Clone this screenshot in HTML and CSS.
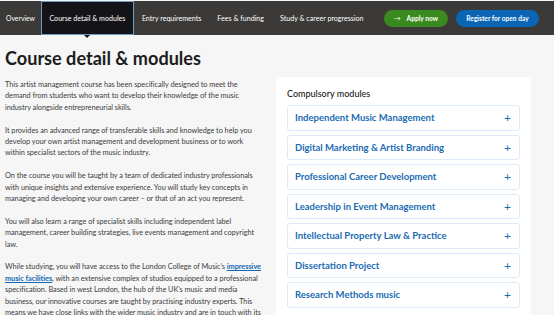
FILE: index.html
```html
<!DOCTYPE html>
<html lang="en">
<head>
<meta charset="utf-8">
<link rel="stylesheet" href="styles.css">
</head>
<body>
<nav class="tabs">
  <a class="tab first">Overview</a>
  <a class="tab active">Course detail &amp; modules</a>
  <a class="tab">Entry requirements</a>
  <a class="tab">Fees &amp; funding</a>
  <a class="tab">Study &amp; career progression</a>
  <div class="actions">
    <a class="btn apply"><span class="arrow">&rarr;</span> Apply now</a>
    <a class="btn register">Register for open day</a>
  </div>
</nav>
<main class="page">
  <section class="content">
    <h1 class="title">Course detail &amp; modules</h1>
    <p>This artist management course has been specifically designed to meet the<br>demand from students who want to develop their knowledge of the music<br>industry alongside entrepreneurial skills.</p>
    <p>It provides an advanced range of transferable skills and knowledge to help you<br>develop your own artist management and development business or to work<br>within specialist sectors of the music industry.</p>
    <p>On the course you will be taught by a team of dedicated industry professionals<br>with unique insights and extensive experience. You will study key concepts in<br>managing and developing your own career – or that of an act you represent.</p>
    <p>You will also learn a range of specialist skills including independent label<br>management, career building strategies, live events management and copyright<br>law.</p>
    <p>While studying, you will have access to the London College of Music’s <a class="link">impressive<br>music facilities</a>, with an extensive complex of studios equipped to a professional<br>specification. Based in west London, the hub of the UK’s music and media<br>business, our innovative courses are taught by practising industry experts. This<br>means we have close links with the wider music industry and are in touch with its</p>
  </section>
  <aside class="card">
    <h2 class="card-title">Compulsory modules</h2>
    <ul class="modules">
      <li class="module"><span>Independent Music Management</span><span class="plus">+</span></li>
      <li class="module"><span>Digital Marketing &amp; Artist Branding</span><span class="plus">+</span></li>
      <li class="module"><span>Professional Career Development</span><span class="plus">+</span></li>
      <li class="module"><span>Leadership in Event Management</span><span class="plus">+</span></li>
      <li class="module"><span>Intellectual Property Law &amp; Practice</span><span class="plus">+</span></li>
      <li class="module"><span>Dissertation Project</span><span class="plus">+</span></li>
      <li class="module"><span>Research Methods music</span><span class="plus">+</span></li>
    </ul>
  </aside>
</main>
</body>
</html>
```
FILE: styles.css
```css
* { box-sizing: border-box; }
html, body { margin: 0; padding: 0; }
body {
  font-family: Lato, "Open Sans", sans-serif;
  background: #f6f6f6;
  color: #404040;
  overflow: hidden;
  height: 315px;
}
.tabs {
  display: flex;
  align-items: stretch;
  height: 34px;
  margin-top: 1px;
  background: #3b3a38;
}
.tab {
  position: relative;
  display: flex;
  align-items: center;
  color: #fff;
  font-size: 7.1px;
  white-space: nowrap;
  border: 1px solid transparent;
  padding: 0 7px;
}
.tab.first { padding: 0 5px 0 5px; font-size: 6.8px; }
.tab.active {
  background: #141418;
  border-color: #6f9bc2;
  padding: 0 7.5px;
}
.tab.active::after {
  content: "";
  position: absolute;
  left: 50%;
  bottom: -4px;
  margin-left: -3px;
  border-left: 3px solid transparent;
  border-right: 3px solid transparent;
  border-top: 3px solid #141418;
}
.actions {
  display: flex;
  align-items: center;
  gap: 8px;
  margin-left: auto;
  padding-right: 15px;
}
.btn {
  display: flex;
  align-items: center;
  justify-content: center;
  height: 17px;
  border-radius: 9px;
  color: #fff;
  font-size: 6.6px;
  font-weight: 700;
  white-space: nowrap;
}
.apply { background: #3a8b1f; width: 64px; }
.apply .arrow { margin-right: 6px; font-weight: 400; }
.register { background: #0a66b4; width: 83px; }
.page {
  display: flex;
  align-items: flex-start;
  padding-left: 5px;
}
.content {
  width: 262px;
  flex: none;
  font-size: 7.35px;
  line-height: 11.4px;
  letter-spacing: -0.05px;
}
.title {
  margin: 11px 0 9px;
  font-size: 18.1px;
  line-height: 24px;
  font-weight: 700;
  color: #1c1c1c;
  letter-spacing: 0;
}
.content p { margin: 0 0 11.4px; white-space: nowrap; }
.link {
  color: #1569b3;
  font-weight: 700;
  text-decoration: underline;
}
.card {
  margin-left: 9px;
  margin-top: 42px;
  width: 255px;
  background: #fff;
  padding: 10px 11px 20px;
}
.card-title {
  margin: 1px 0 5px;
  font-size: 9px;
  line-height: 12px;
  font-weight: 500;
  color: #222;
}
.modules {
  list-style: none;
  margin: 0;
  padding: 0;
  display: flex;
  flex-direction: column;
  gap: 4px;
}
.module {
  display: flex;
  align-items: center;
  justify-content: space-between;
  height: 25.5px;
  padding: 0 8px 0 7px;
  border: 1px solid #dcebf7;
  border-radius: 3px;
  color: #1a6cb3;
  font-size: 9.5px;
  font-weight: 700;
}
.plus {
  font-size: 12px;
  font-weight: 400;
  color: #1a6cb3;
}
```
